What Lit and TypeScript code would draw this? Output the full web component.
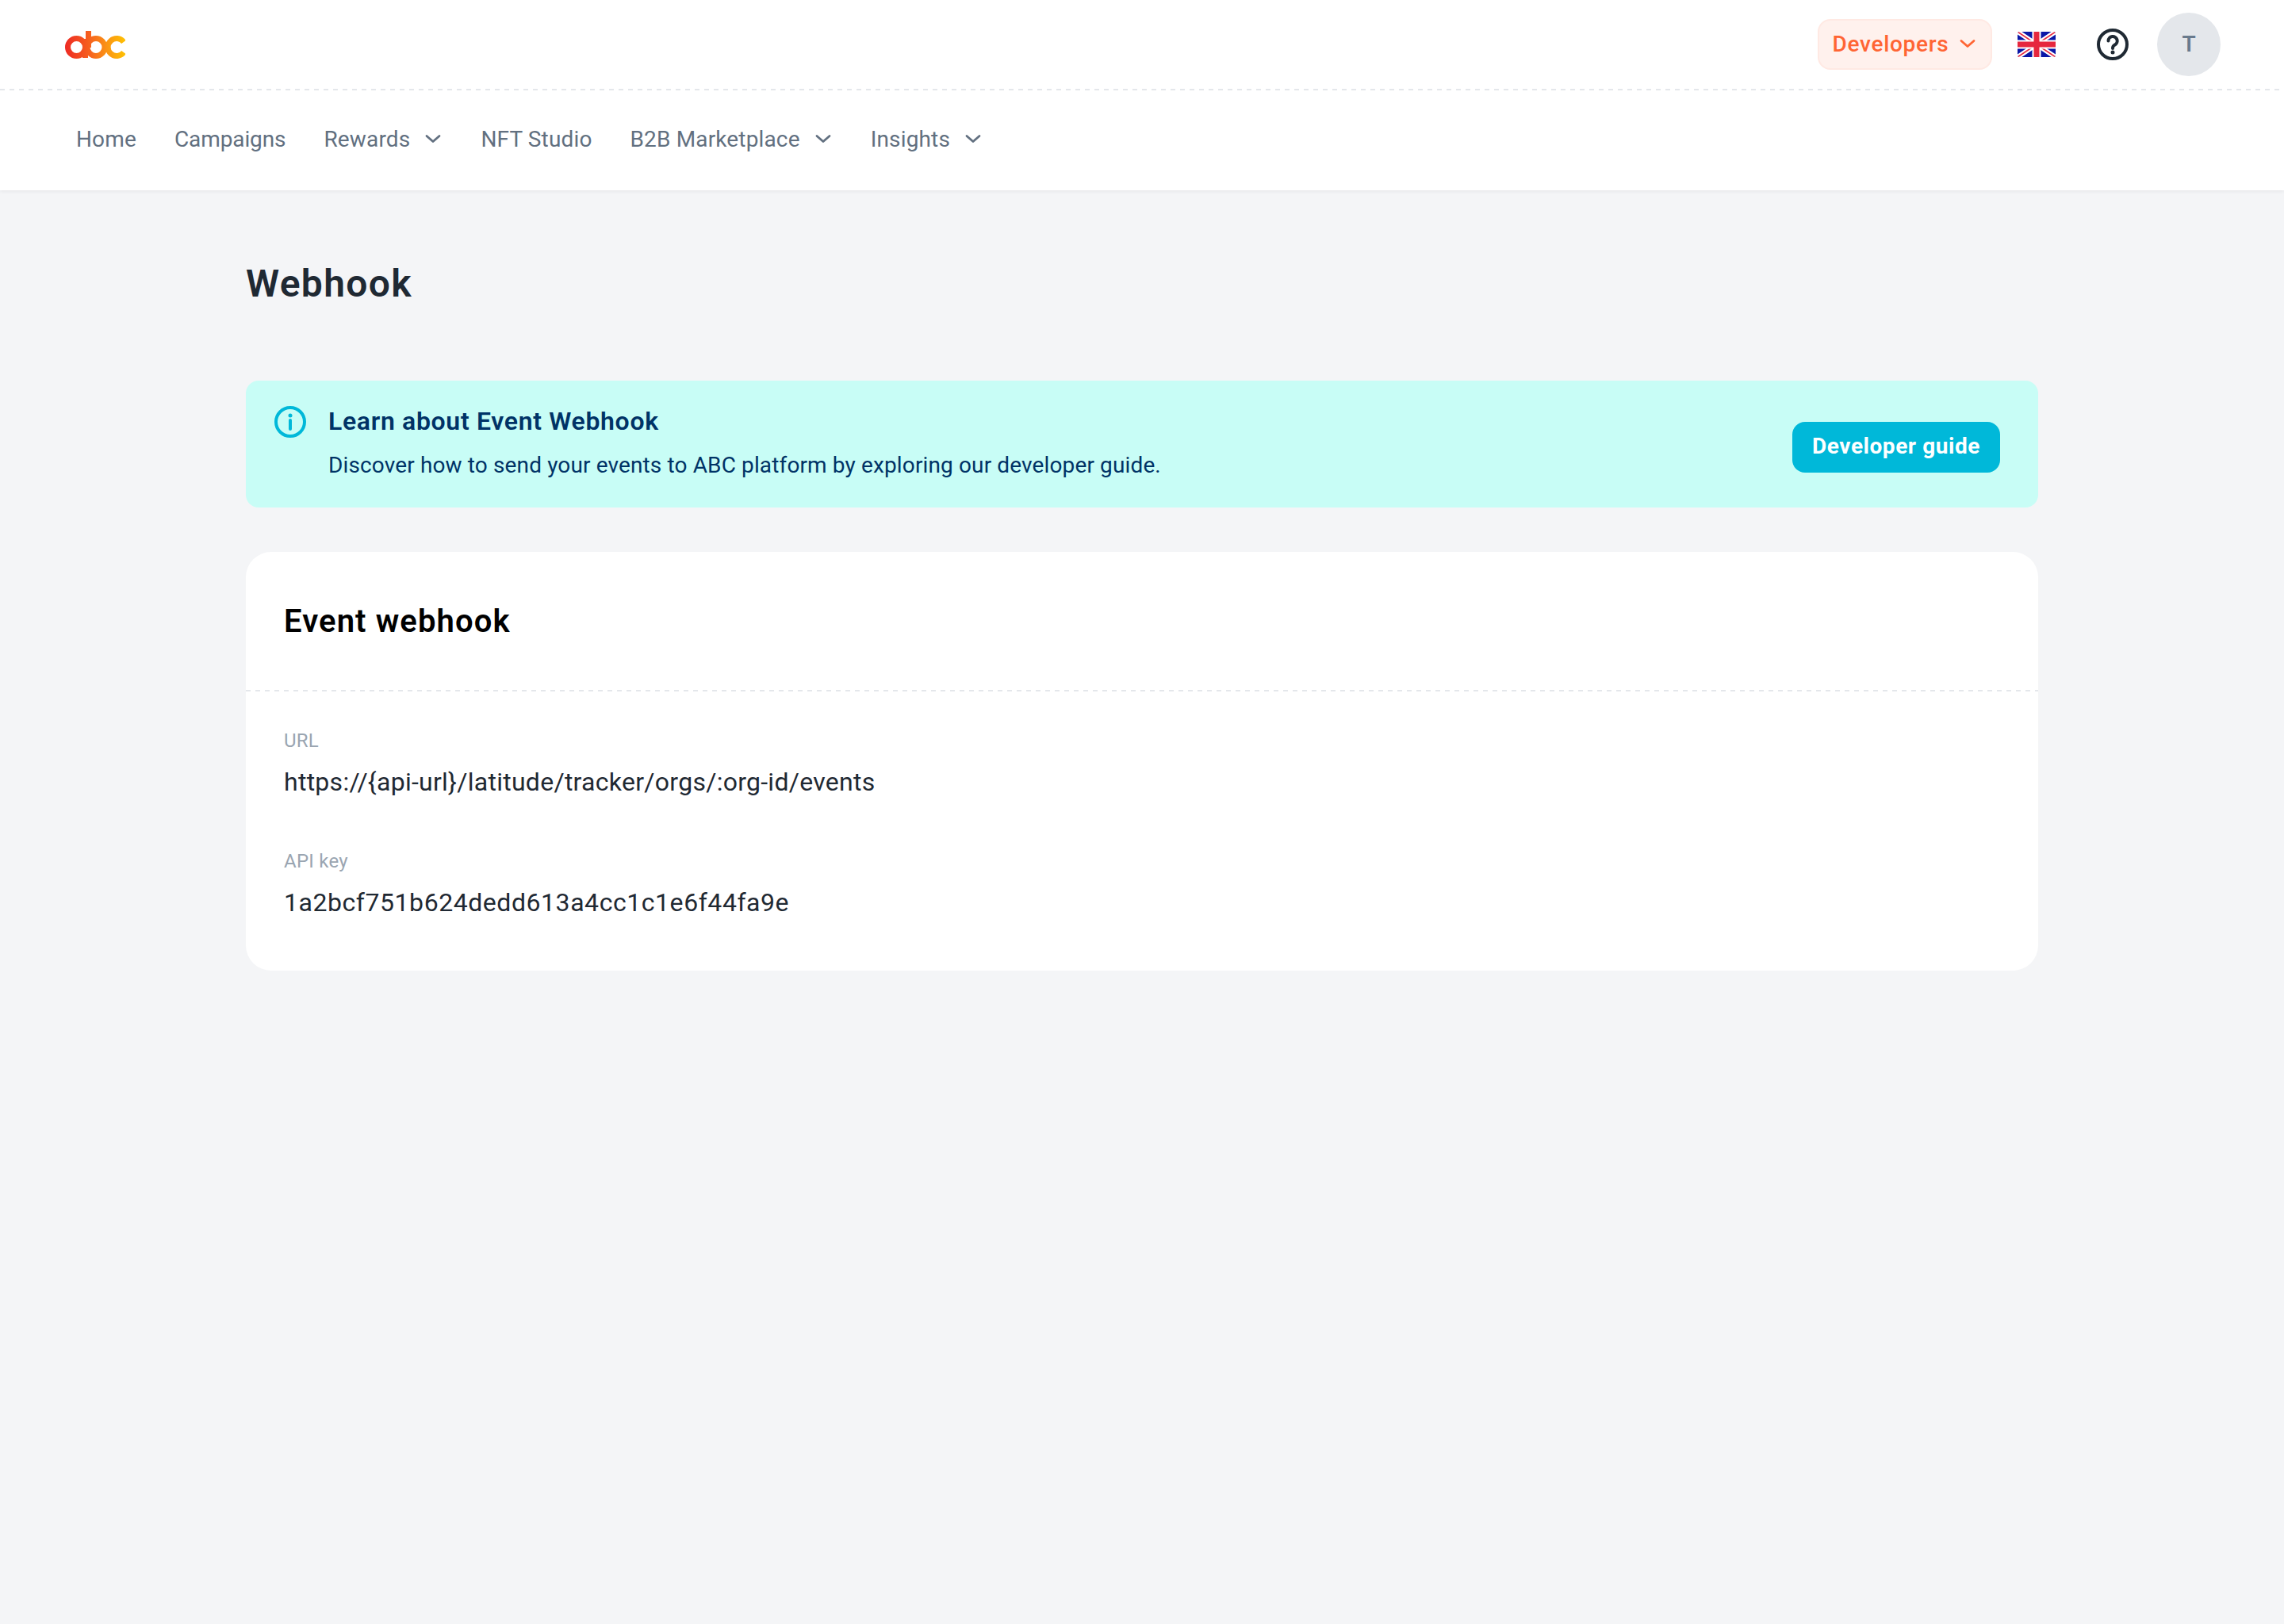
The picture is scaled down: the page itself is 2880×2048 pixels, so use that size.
import { LitElement, html, css } from "lit";
import { customElement } from "lit/decorators.js";

const chevron = () => html`<svg class="chev" viewBox="0 0 24 24" fill="none" stroke="currentColor" stroke-width="2.8" stroke-linecap="round" stroke-linejoin="round"><path d="M4 8.5 L12 15.5 L20 8.5"/></svg>`;

const logo = html`<svg class="logo" viewBox="0 0 76 36" fill="none">
  <defs>
    <linearGradient id="lg" x1="0" x2="76" y1="0" y2="0" gradientUnits="userSpaceOnUse">
      <stop offset="0" stop-color="#ee2a24"/><stop offset="0.4" stop-color="#f6601f"/>
      <stop offset="0.7" stop-color="#fb9513"/><stop offset="1" stop-color="#fec103"/>
    </linearGradient>
  </defs>
  <g stroke="url(#lg)" stroke-width="7">
    <circle cx="14.5" cy="21.5" r="11"/>
    <path d="M25.5 11 V35"/>
    <path d="M29.5 1 V22"/>
    <circle cx="39" cy="21.5" r="11"/>
    <path d="M74 15 A11 11 0 1 0 74 28"/>
  </g>
</svg>`;

const flag = html`<svg class="flag" viewBox="0 0 48 32">
  <defs><clipPath id="fc"><rect width="48" height="32" rx="2.5"/></clipPath></defs>
  <g clip-path="url(#fc)">
    <rect width="48" height="32" fill="#0a17a7"/>
    <path d="M0 0 L48 32 M48 0 L0 32" stroke="#fff" stroke-width="6"/>
    <path d="M0 0 L24 16 M48 32 L24 16 M48 0 L24 16 M0 32 L24 16" stroke="#e6273e" stroke-width="1.6"/>
    <path d="M24 0 V32 M0 16 H48" stroke="#fff" stroke-width="11"/>
    <path d="M24 0 V32 M0 16 H48" stroke="#e6273e" stroke-width="7"/>
  </g>
</svg>`;

const help = html`<svg class="help" viewBox="0 0 40 40" fill="none" stroke="#1f2933">
  <circle cx="20" cy="20" r="18" stroke-width="4"/>
  <path d="M14.5 15.5 A5.6 5.6 0 1 1 22.6 20.6 C20.8 21.6 20 22.8 20 25" stroke-width="4" stroke-linecap="round"/>
  <circle cx="20" cy="30" r="2.5" fill="#1f2933" stroke="none"/>
</svg>`;

const info = html`<svg class="info" viewBox="0 0 40 40" fill="none" stroke="#00b8d9">
  <circle cx="20" cy="20" r="18" stroke-width="4"/>
  <path d="M20 18 V29" stroke-width="4" stroke-linecap="round"/>
  <circle cx="20" cy="12" r="2.5" fill="#00b8d9" stroke="none"/>
</svg>`;

@customElement("app-root")
export class AppRoot extends LitElement {
  static styles = css`
    :host { display: block; min-height: 2048px; background: #f4f5f7; font-family: "Roboto", "Noto Sans", sans-serif; color: #1f2933; }
    * { box-sizing: border-box; }
    .topbar { height: 114px; background: #fff repeating-linear-gradient(90deg, #e4e7eb 0 6px, transparent 6px 12px) left bottom / 100% 2px no-repeat; display: flex; align-items: center; justify-content: space-between; padding: 0 80px 2px 82px; }
    .logo { width: 76px; height: 36px; display: block; }
    .right { display: flex; align-items: center; }
    .dev { width: 220px; height: 64px; border-radius: 16px; background: #fff1ed; border: 2px solid #ffe9e3; color: #ff6534; font-size: 28px; font-weight: 500; letter-spacing: .7px; display: flex; align-items: center; justify-content: center; gap: 12px; padding-bottom: 2px; }
    .flag { width: 48px; height: 32px; margin-left: 32px; display: block; }
    .help { width: 40px; height: 40px; margin-left: 52px; display: block; }
    .avatar { width: 80px; height: 80px; border-radius: 50%; background: #e4e7eb; color: #697a8c; margin-left: 36px; display: flex; align-items: center; justify-content: center; font-size: 28px; font-weight: 600; padding-bottom: 2px; }
    .chev { width: 24px; height: 24px; display: block; flex: none; }
    .nav { height: 126px; background: #fff; box-shadow: 0 2px 4px rgba(31,41,51,.06); display: flex; align-items: center; padding: 0 0 4px 96px; gap: 48px; }
    .nav a { font-size: 28px; color: #627080; display: flex; align-items: center; gap: 14px; letter-spacing: .15px; }
    .nav a.tight { letter-spacing: -.1px; }
    .nav a .chev { margin-left: 3px; }
    main { padding: 0 310px; }
    h1 { margin: 0; height: 240px; padding-bottom: 6px; display: flex; align-items: center; font-size: 48px; font-weight: 600; letter-spacing: 1.3px; color: #1f2933; }
    .banner { height: 160px; background: #c8fdf6; border-radius: 16px; display: flex; align-items: center; padding: 0 48px 0 36px; }
    .info { width: 40px; height: 40px; flex: none; align-self: flex-start; margin-top: 32px; }
    .btext { flex: 1; margin-left: 28px; color: #003366; padding-bottom: 2px; }
    .btitle { font-size: 32px; font-weight: 600; line-height: 40px; letter-spacing: .67px; }
    .bdesc { font-size: 28px; line-height: 40px; margin-top: 16px; letter-spacing: .13px; }
    .btn { width: 262px; height: 64px; border-radius: 16px; background: #00b8d9; color: #fff; font-size: 28px; font-weight: 700; letter-spacing: .55px; display: flex; align-items: center; justify-content: center; margin-top: 8px; padding-bottom: 3px; }
    .card { margin-top: 56px; height: 528px; background: #fff; border-radius: 32px; }
    .chead { height: 176px; padding: 0 48px 2px; background: repeating-linear-gradient(90deg, #e4e7eb 0 6px, transparent 6px 12px) left bottom / 100% 2px no-repeat; display: flex; align-items: center; font-size: 40px; font-weight: 600; letter-spacing: 1.1px; color: #000; }
    .cbody { padding: 46px 48px 0; }
    .field { height: 152px; }
    .label { font-size: 24px; line-height: 32px; color: #9aa5b1; letter-spacing: .25px; }
    .value { font-size: 32px; line-height: 40px; margin-top: 16px; color: #1f2933; letter-spacing: .27px; }
    .key { letter-spacing: .55px; }
  `;

  render() {
    return html`
      <div class="topbar">
        ${logo}
        <div class="right">
          <div class="dev"><span>Developers</span>${chevron()}</div>
          ${flag}
          ${help}
          <div class="avatar">T</div>
        </div>
      </div>
      <nav class="nav">
        <a>Home</a>
        <a class="tight">Campaigns</a>
        <a>Rewards ${chevron()}</a>
        <a>NFT Studio</a>
        <a>B2B Marketplace ${chevron()}</a>
        <a>Insights ${chevron()}</a>
      </nav>
      <main>
        <h1>Webhook</h1>
        <section class="banner">
          ${info}
          <div class="btext">
            <div class="btitle">Learn about Event Webhook</div>
            <div class="bdesc">Discover how to send your events to ABC platform by exploring our developer guide.</div>
          </div>
          <div class="btn">Developer guide</div>
        </section>
        <section class="card">
          <div class="chead">Event webhook</div>
          <div class="cbody">
            <div class="field">
              <div class="label">URL</div>
              <div class="value">https://{api-url}/latitude/tracker/orgs/:org-id/events</div>
            </div>
            <div class="field">
              <div class="label">API key</div>
              <div class="value key">1a2bcf751b624dedd613a4cc1c1e6f44fa9e</div>
            </div>
          </div>
        </section>
      </main>
    `;
  }
}
